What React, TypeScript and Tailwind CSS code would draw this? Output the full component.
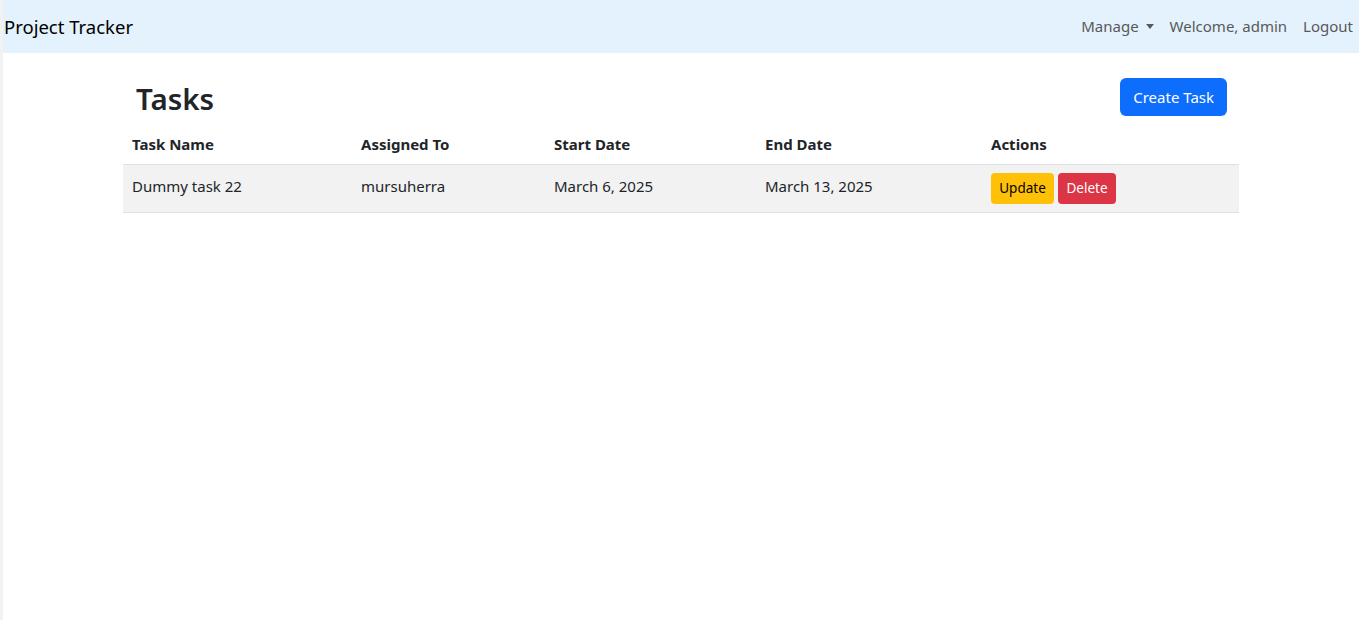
import React from "react";

const font = { fontFamily: '"Noto Sans", "Open Sans", sans-serif' };

export default function App() {
  return (
    <div
      className="min-h-[620px] bg-white border-l-[3px] border-[#f2f2f2] text-[#212529]"
      style={font}
    >
      <nav className="h-[53px] bg-[#e3f2fd] flex items-center justify-between pl-[1px] pr-[6px]">
        <span className="text-[18.5px] text-black leading-[30px]">Project Tracker</span>
        <div className="flex items-center text-[15px] text-[#595959]">
          <span className="px-2 flex items-center">
            Manage
            <span className="ml-[7px] inline-block w-0 h-0 border-t-[5px] border-t-[#595959] border-x-[4.5px] border-x-transparent" />
          </span>
          <span className="px-2">Welcome, admin</span>
          <span className="pl-2">Logout</span>
        </div>
      </nav>
      <div className="w-[1116px] mx-auto mt-[24px]">
        <div className="flex items-center justify-between px-3 mb-[7px]">
          <h2 className="text-[29.5px] font-semibold leading-[36px] pt-[4px] pl-[1px]">Tasks</h2>
          <button className="bg-[#0d6efd] text-white text-[15px] rounded-[6px] h-[38px] px-[13px] leading-6">
            Create Task
          </button>
        </div>
        <table className="w-full text-[15px] border-collapse">
          <thead>
            <tr className="border-b border-[#dee2e6] text-left">
              <th className="w-[229px] p-2 pl-[9px] font-bold leading-6">Task Name</th>
              <th className="w-[193px] p-2 pl-[9px] font-bold leading-6">Assigned To</th>
              <th className="w-[211px] p-2 pl-[9px] font-bold leading-6">Start Date</th>
              <th className="w-[226px] p-2 pl-[9px] font-bold leading-6">End Date</th>
              <th className="p-2 pl-[9px] font-bold leading-6">Actions</th>
            </tr>
          </thead>
          <tbody>
            <tr className="bg-[#f2f2f2] border-b border-[#dee2e6] align-top">
              <td className="px-2 pl-[9px] pt-[9px] pb-[8px] leading-6">Dummy task 22</td>
              <td className="px-2 pl-[9px] pt-[9px] pb-[8px] leading-6">mursuherra</td>
              <td className="px-2 pl-[9px] pt-[9px] pb-[8px] leading-6">March 6, 2025</td>
              <td className="px-2 pl-[9px] pt-[9px] pb-[8px] leading-6">March 13, 2025</td>
              <td className="px-2 pl-[9px] pt-[8px] pb-[8px]">
                <div className="flex gap-1">
                  <button className="bg-[#ffc107] text-black text-[13.5px] rounded-[4px] h-[31px] w-[63px]">
                    Update
                  </button>
                  <button className="bg-[#dc3545] text-white text-[13.5px] rounded-[4px] h-[31px] w-[58px]">
                    Delete
                  </button>
                </div>
              </td>
            </tr>
          </tbody>
        </table>
      </div>
    </div>
  );
}
